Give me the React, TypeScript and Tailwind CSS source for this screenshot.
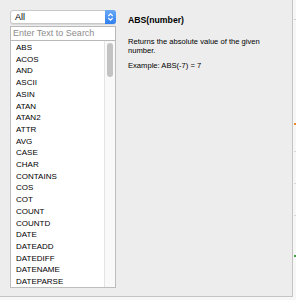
import React from "react";

const items = [
  "ABS","ACOS","AND","ASCII","ASIN","ATAN","ATAN2","ATTR","AVG","CASE","CHAR","CONTAINS","COS","COT","COUNT","COUNTD","DATE","DATEADD","DATEDIFF","DATENAME","DATEPARSE",
];

export default function App() {
  return (
    <div className="w-[296px] h-[300px] bg-[#f7f7f7] relative overflow-hidden" style={{ fontFamily: '"Liberation Sans", Arial, sans-serif' }}>
      <div className="w-[293px] h-[297px] bg-[#ededed] border-r border-b border-[#c4c4c4] flex pl-[10px] pt-[10px]">
        <div className="w-[106px] flex flex-col">
          <div className="h-[14px] flex bg-white rounded-[3px] border border-[#c8c8c8] shadow-[0_1px_0_rgba(0,0,0,0.08)]">
            <div className="flex-1 text-[9px] leading-[12px] text-[#000] pl-[4px]">All</div>
            <div className="w-[11px] -my-px -mr-px rounded-r-[3px] bg-gradient-to-b from-[#6aa9f6] to-[#2f7ff0] flex items-center justify-center">
              <svg width="7" height="10" viewBox="0 0 7 10">
                <path d="M1.3 4 L3.5 1.8 L5.7 4" stroke="white" strokeWidth="1.1" fill="none" />
                <path d="M1.3 6 L3.5 8.2 L5.7 6" stroke="white" strokeWidth="1.1" fill="none" />
              </svg>
            </div>
          </div>
          <div className="mt-[2px] h-[15px] bg-white border border-[#b9b9b9] text-[9px] leading-[13px] text-[#8c8c8c] pl-[2px] whitespace-nowrap">
            Enter Text to Search
          </div>
          <div className="h-[247px] bg-white border border-[#bdbdbd] border-t-0 flex overflow-hidden">
            <div className="flex-1 pl-[5px] pt-px text-[8px] leading-[11.7px] text-[#000] overflow-hidden">
              {items.map((t) => (
                <div key={t}>{t}</div>
              ))}
            </div>
            <div className="w-[11px] bg-[#f9f9f9] border-l border-[#e3e3e3] pl-[2px] pt-[2px]">
              <div className="w-[6px] h-[34px] rounded-full bg-[#c3c3c3]" />
            </div>
          </div>
        </div>
        <div className="ml-[12px] pt-[5px] text-[#000]">
          <div className="text-[8.7px] font-bold leading-[10px]">ABS(number)</div>
          <div className="mt-[12px] text-[7.6px] leading-[9px] w-[140px]">
            Returns the absolute value of the given number.
          </div>
          <div className="mt-[6px] text-[7.6px] leading-[9px]">Example: ABS(-7) = 7</div>
        </div>
      </div>
      <div className="absolute left-[294px] top-[123px] w-[2px] h-[2px] bg-[#f08a24]" />
      <div className="absolute left-[294px] top-[255px] w-[2px] h-[2px] bg-[#3aa640]" />
      <div className="absolute left-[294px] top-[19px] w-[2px] h-px bg-[#d0d0d0]" />
      <div className="absolute left-[294px] top-[151px] w-[2px] h-px bg-[#d8d8d8]" />
      <div className="absolute left-[294px] top-[183px] w-[2px] h-px bg-[#d8d8d8]" />
      <div className="absolute left-[294px] top-[215px] w-[2px] h-px bg-[#d8d8d8]" />
    </div>
  );
}
